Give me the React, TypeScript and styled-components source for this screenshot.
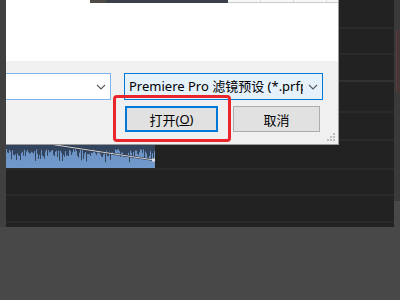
import React from "react";
import styled, { createGlobalStyle } from "styled-components";

const Global = createGlobalStyle`
  html, body { margin: 0; padding: 0; background: #484848; overflow: hidden; }
  * { box-sizing: border-box; }
`;

const Page = styled.div`
  position: relative;
  width: 400px;
  height: 300px;
  background: #484848;
  overflow: hidden;
  font-family: "Noto Sans", "Noto Sans CJK SC", sans-serif;
`;

const Workspace = styled.div`
  display: flex;
  height: 227px;
`;

const LeftRail = styled.div`
  width: 6px;
  background: #404040;
`;

const Timeline = styled.div`
  flex: 1;
  display: flex;
  flex-direction: column;
  background: #222222;
`;

const Track = styled.div<{ $h: number }>`
  position: relative;
  height: ${(p) => p.$h}px;
  background: #222222;
`;

const Divider = styled.div<{ $strong?: boolean; $h?: number }>`
  height: ${(p) => p.$h ?? 2}px;
  background: ${(p) => (p.$strong ? "#313131" : "#2a2a2a")};
`;

const ScrollRail = styled.div`
  width: 6px;
  height: 201px;
  display: flex;
  flex-direction: column;
  background: #3a3a3a;
`;

const RailMark = styled.div`
  margin-top: 30px;
  height: 62px;
  margin-left: 2px;
  background: #463636;
  border-left: 1px solid #5a3a3a;
`;

const Clip = styled.div`
  width: 149px;
  height: 100%;
  background: linear-gradient(#6a90c2, #7299cb);
`;

const Dialog = styled.div`
  position: absolute;
  left: 6px;
  top: 0;
  width: 333px;
  height: 145px;
  display: flex;
  flex-direction: column;
  border-right: 1px solid #9a9a9a;
  border-bottom: 1px solid #9a9a9a;
  overflow: hidden;
`;

const ListArea = styled.div`
  height: 61px;
  background: #ffffff;
`;

const TopStrip = styled.div`
  display: flex;
  height: 3px;
`;

const StripPart = styled.div<{ $w?: number; $c: string }>`
  ${(p) => (p.$w ? `width: ${p.$w}px;` : "flex: 1;")}
  background: ${(p) => p.$c};
`;

const HeaderStrip = styled.div`
  flex: 1;
  display: flex;
  background: #f7f7f7;
  border-bottom: 1px solid #c8cece;
`;

const HeaderCell = styled.div`
  width: 33px;
  flex: none;
  border-right: 1px solid #dadede;
`;

const Footer = styled.div`
  position: relative;
  flex: 1;
  background: #f0f0f0;
  display: flex;
  flex-direction: column;
  padding-top: 12px;
  gap: 6px;
`;

const Row = styled.div<{ $pl: number; $gap: number }>`
  display: flex;
  padding-left: ${(p) => p.$pl}px;
  gap: ${(p) => p.$gap}px;
`;

const Combo = styled.div<{ $w: number; $active?: boolean; $noLeft?: boolean }>`
  width: ${(p) => p.$w}px;
  height: 27px;
  display: flex;
  align-items: center;
  background: ${(p) => (p.$active ? "#e5f1fb" : "#ffffff")};
  border: 1px solid ${(p) => (p.$active ? "#0078d7" : "#7eb4ea")};
  ${(p) => (p.$noLeft ? "border-left: none;" : "")}
`;

const ComboText = styled.div`
  flex: 1;
  min-width: 0;
  overflow: hidden;
  white-space: nowrap;
  padding-left: 4px;
  font-size: 13px;
  color: #000;
  line-height: 25px;
`;

const Chevron = styled.div`
  width: 19px;
  height: 25px;
  display: flex;
  align-items: center;
  justify-content: center;
`;

const Button = styled.div<{ $w: number; $primary?: boolean }>`
  width: ${(p) => p.$w}px;
  height: 26px;
  display: flex;
  align-items: center;
  justify-content: center;
  background: #e1e1e1;
  border: ${(p) => (p.$primary ? "2px solid #0078d7" : "1px solid #adadad")};
  font-size: 13px;
  color: #000;
`;

const Mnemonic = styled.span`
  text-decoration: underline;
`;

const Grip = styled.svg`
  position: absolute;
  right: 2px;
  bottom: 2px;
`;

const Highlight = styled.div`
  position: absolute;
  left: 113px;
  top: 95px;
  width: 118px;
  height: 47px;
  border: 3px solid #e8262b;
  border-radius: 4px;
`;

function ChevronIcon() {
  return (
    <svg width="10" height="6" viewBox="0 0 10 6">
      <path d="M1 1 L5 5 L9 1" fill="none" stroke="#5a5a5a" strokeWidth="1.1" />
    </svg>
  );
}

function Waveform() {
  const bars: React.ReactNode[] = [];
  for (let i = 0; i < 149; i += 1) {
    const v = Math.abs(
      Math.sin(i * 1.7) * 0.5 + Math.sin(i * 0.37) * 0.3 + Math.sin(i * 4.3) * 0.35
    );
    const d = 8 + v * 12;
    bars.push(<rect key={i} x={i} y={0} width={1} height={d} fill="#33455e" />);
  }
  return (
    <svg width="149" height="27" viewBox="0 0 149 27">
      {bars}
      <line x1="30" y1="1" x2="148" y2="19" stroke="#2a3240" strokeWidth="2.2" />
      <line x1="30" y1="1" x2="148" y2="19" stroke="#d0d4da" strokeWidth="1" />
      <rect x="146" y="17.5" width="3" height="3" fill="#e0e0e0" />
    </svg>
  );
}

const tracks: { h: number; strong?: boolean }[] = [
  { h: 27 },
  { h: 24 },
  { h: 25, strong: true },
  { h: 29 },
  { h: 26 },
  { h: 27 },
  { h: 24 },
  { h: 25 },
];

export default function App() {
  return (
    <Page>
      <Global />
      <Workspace>
        <LeftRail />
        <Timeline>
          {tracks.map((t, i) => (
            <React.Fragment key={i}>
              <Track $h={t.h}>
                {i === 5 && (
                  <Clip>
                    <Waveform />
                  </Clip>
                )}
              </Track>
              <Divider $strong={t.strong} />
            </React.Fragment>
          ))}
          <Track $h={4} />
        </Timeline>
        <ScrollRail>
          <RailMark />
        </ScrollRail>
      </Workspace>

      <Dialog>
        <ListArea>
          <TopStrip>
            <StripPart $w={84} $c="#ffffff" />
            <StripPart $w={16} $c="#4f4b46" />
            <StripPart $w={122} $c="#3a3f48" />
            <HeaderStrip>
              <HeaderCell />
              <HeaderCell />
              <HeaderCell />
            </HeaderStrip>
          </TopStrip>
        </ListArea>
        <Footer>
          <Row $pl={0} $gap={13}>
            <Combo $w={105} $noLeft>
              <ComboText />
              <Chevron>
                <ChevronIcon />
              </Chevron>
            </Combo>
            <Combo $w={199} $active>
              <ComboText>Premiere Pro 滤镜预设 (*.prfpset)</ComboText>
              <Chevron>
                <ChevronIcon />
              </Chevron>
            </Combo>
          </Row>
          <Row $pl={119} $gap={15}>
            <Button $w={93} $primary>
              打开(<Mnemonic>O</Mnemonic>)
            </Button>
            <Button $w={87}>取消</Button>
          </Row>
          <Grip width="10" height="10" viewBox="0 0 10 10">
            <rect x="7" y="1" width="2" height="2" fill="#bdbdbd" />
            <rect x="4" y="4" width="2" height="2" fill="#bdbdbd" />
            <rect x="7" y="4" width="2" height="2" fill="#bdbdbd" />
            <rect x="1" y="7" width="2" height="2" fill="#bdbdbd" />
            <rect x="4" y="7" width="2" height="2" fill="#bdbdbd" />
            <rect x="7" y="7" width="2" height="2" fill="#bdbdbd" />
          </Grip>
        </Footer>
      </Dialog>
      <Highlight />
    </Page>
  );
}
